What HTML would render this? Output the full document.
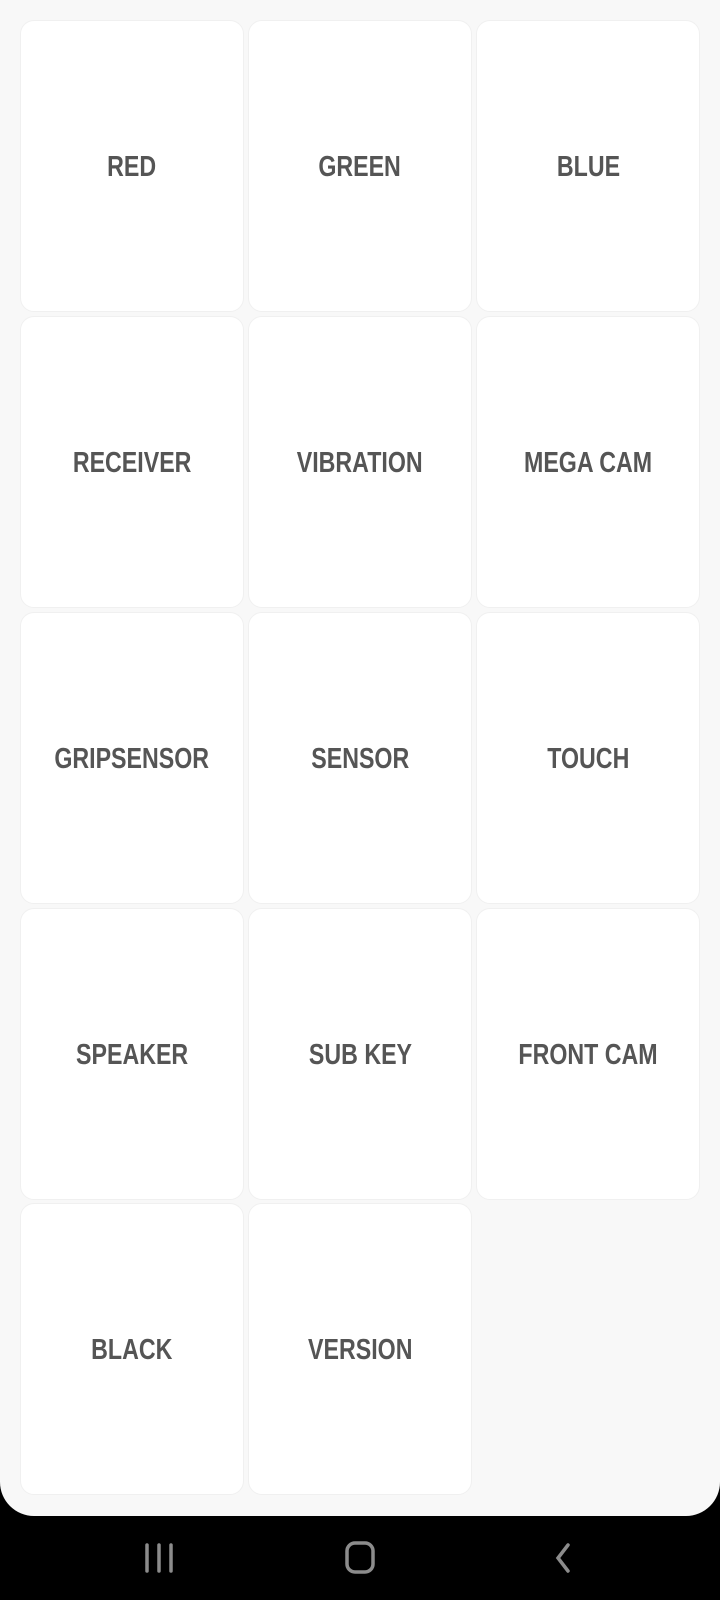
<!DOCTYPE html>
<html><head><meta charset="utf-8"><style>
html,body{margin:0;padding:0;width:720px;height:1600px;background:#000;overflow:hidden}
.panel{position:absolute;left:0;top:0;width:720px;height:1516px;background:#f8f8f8;border-radius:0 0 34px 34px}
.card{position:absolute;width:222px;height:290px;background:#fff;border:1px solid #f0f0f0;border-radius:14px;display:flex;align-items:center;justify-content:center}
.card span{font-family:"Liberation Sans",sans-serif;font-weight:bold;font-size:29px;color:#555;transform:scaleX(0.8);white-space:nowrap;display:inline-block;position:relative;top:1px}
</style></head><body>
<div class="panel">
<div class="card" style="left:20px;top:20px"><span>RED</span></div>
<div class="card" style="left:248px;top:20px"><span>GREEN</span></div>
<div class="card" style="left:476px;top:20px"><span>BLUE</span></div>
<div class="card" style="left:20px;top:316px"><span>RECEIVER</span></div>
<div class="card" style="left:248px;top:316px"><span>VIBRATION</span></div>
<div class="card" style="left:476px;top:316px"><span>MEGA CAM</span></div>
<div class="card" style="left:20px;top:612px"><span>GRIPSENSOR</span></div>
<div class="card" style="left:248px;top:612px"><span>SENSOR</span></div>
<div class="card" style="left:476px;top:612px"><span>TOUCH</span></div>
<div class="card" style="left:20px;top:908px"><span>SPEAKER</span></div>
<div class="card" style="left:248px;top:908px"><span>SUB KEY</span></div>
<div class="card" style="left:476px;top:908px"><span>FRONT CAM</span></div>
<div class="card" style="left:20px;top:1203px"><span>BLACK</span></div>
<div class="card" style="left:248px;top:1203px"><span>VERSION</span></div>
</div>
<svg style="position:absolute;left:0;top:1516px" width="720" height="84">
<g stroke="#8c8c8c" stroke-width="3.5" fill="none" stroke-linecap="round">
<line x1="147" y1="29" x2="147" y2="55"/><line x1="159" y1="29" x2="159" y2="55"/><line x1="171" y1="29" x2="171" y2="55"/>
<rect x="347" y="27" width="26" height="29" rx="8"/>
<polyline points="568,29 558,42 568,55"/>
</g></svg>
</body></html>
